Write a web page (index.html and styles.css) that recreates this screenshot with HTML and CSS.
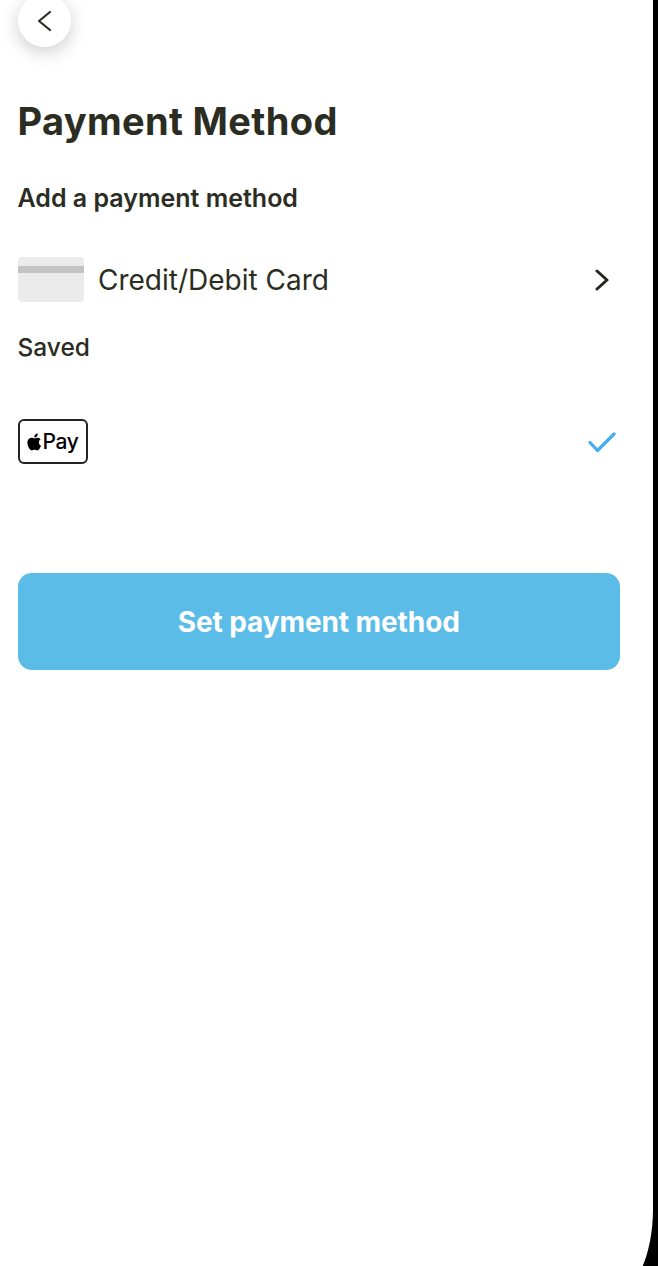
FILE: index.html
```html
<!DOCTYPE html>
<html lang="en">
<head>
  <meta charset="UTF-8" />
  <meta name="viewport" content="width=device-width, initial-scale=1.0" />
  <title>Payment Method</title>
  <link rel="stylesheet" href="styles.css">
</head>
<body>
  <div class="screen">
    <button class="back-btn" type="button" aria-label="Back">
      <svg width="16" height="22" viewBox="0 0 16 22"><path d="M14 2 L3 11 L14 20" fill="none" stroke="#2b2d22" stroke-width="2.200" stroke-linecap="round" stroke-linejoin="round" /></svg>
    </button>

    <h1 class="page-title">Payment Method</h1>
    <h2 class="section-title">Add a payment method</h2>

    <div class="method-row card-row">
      <div class="card-icon"><div class="card-stripe"></div></div>
      <span class="method-label">Credit/Debit Card</span>
      <svg class="row-icon" width="14" height="22" viewBox="0 0 14 22"><path d="M2 2 L12 11 L2 20" fill="none" stroke="#24261f" stroke-width="3" stroke-linecap="round" stroke-linejoin="round" /></svg>
    </div>

    <h3 class="saved-title">Saved</h3>

    <div class="method-row pay-row">
      <div class="pay-badge">
        <svg width="17" height="20" viewBox="0 0 16 19"><path d="M13.100 10c0-2 1.600-2.900 1.700-3-1-1.400-2.400-1.600-2.900-1.600-1.200-.1-2.400.7-3 .7s-1.600-.7-2.600-.7C4.900 5.400 3.600 6.200 2.900 7.400c-1.400 2.400-.4 6 1 8 .7 1 1.500 2.100 2.500 2 1 0 1.400-.6 2.600-.6s1.600.6 2.600.6c1.100 0 1.800-1 2.400-2 .8-1.100 1.100-2.200 1.100-2.300 0 0-2-.8-2-3.100zM11.200 4c.5-.7.900-1.600.8-2.600-.8 0-1.800.5-2.400 1.200-.5.6-1 1.600-.9 2.500.9.1 1.900-.4 2.500-1.100z" fill="#000" /></svg>
        <span class="pay-text">Pay</span>
      </div>
      <svg class="check-icon" width="28" height="22" viewBox="0 0 28 22"><path d="M2 11.500 L9.500 19.500 L26 3" fill="none" stroke="#45adf2" stroke-width="3.200" stroke-linecap="round" stroke-linejoin="round" /></svg>
    </div>

    <button class="submit-btn" type="button">Set payment method</button>
  </div>
</body>
</html>
```

FILE: styles.css
```css
* {
  margin: 0;
  padding: 0;
  box-sizing: border-box;
  font-family: Inter, "Liberation Sans", sans-serif;
}

html, body {
  height: 1266px;
  overflow: hidden;
  background: #000;
}

.screen {
  width: 653px;
  height: 1300px;
  padding: 0 33px 0 17.500px;
  background: #fff;
  border-bottom-right-radius: 40px 85px;
  color: #2b2d22;
}

.back-btn {
  display: flex;
  justify-content: center;
  align-items: center;
  width: 53px;
  height: 53px;
  margin-top: -6px;
  margin-left: 0.500px;
  padding-right: 1px;
  background: #fff;
  border: none;
  border-radius: 50%;
  box-shadow: 0 5px 18px rgba(0, 0, 0, 0.2);
}

.page-title {
  margin-top: 52px;
  font-size: 38px;
  font-weight: 700;
  line-height: 44px;
  letter-spacing: 0.350px;
}

.section-title {
  margin-top: 40px;
  font-size: 25px;
  font-weight: 600;
  line-height: 30px;
}

.method-row {
  display: flex;
  align-items: center;
}

.card-row {
  margin-top: 44px;
}

.card-icon {
  width: 66.500px;
  height: 45px;
  padding-top: 9px;
  background: #ebebeb;
  border-radius: 4px;
}

.card-stripe {
  height: 7px;
  background: #c4c4c4;
}

.method-label {
  margin-left: 14px;
  font-size: 28px;
  font-weight: 400;
}

.row-icon {
  margin-left: auto;
  margin-right: 11px;
}

.check-icon {
  margin-left: auto;
  margin-right: 4px;
}

.saved-title {
  margin-top: 30px;
  font-size: 24.500px;
  font-weight: 500;
  line-height: 30px;
}

.pay-row {
  margin-top: 57px;
}

.pay-badge {
  display: flex;
  justify-content: center;
  align-items: center;
  width: 70px;
  height: 45px;
  padding-right: 1px;
  background: #fff;
  border: 2px solid #222;
  border-radius: 6px;
  color: #000;
}

.pay-text {
  font-size: 21px;
  font-weight: 500;
  letter-spacing: -0.300px;
}

.submit-btn {
  display: block;
  width: 602.500px;
  height: 97px;
  margin-top: 109px;
  background: #5cbce8;
  color: #fff;
  font-size: 28px;
  font-weight: 700;
  letter-spacing: -0.100px;
  border: none;
  border-radius: 14px;
}
```
